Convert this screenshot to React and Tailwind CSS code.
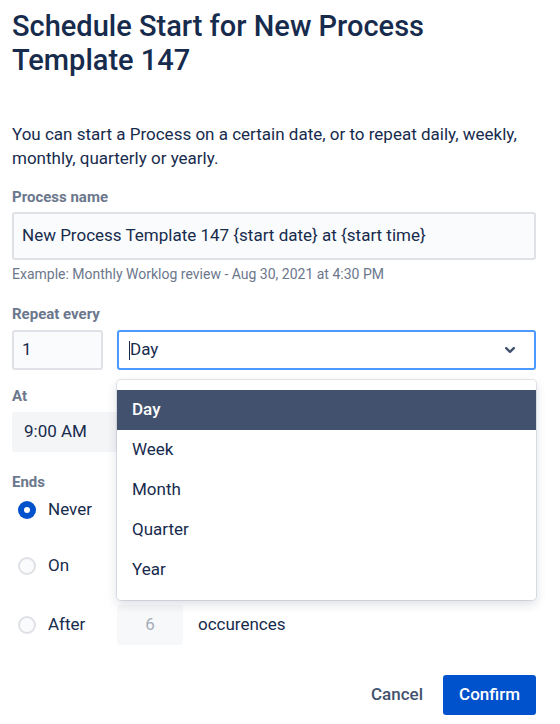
import React from "react";

function Radio({ checked }) {
  if (checked) {
    return (
      <span className="flex h-[18px] w-[18px] items-center justify-center rounded-full bg-[#0052cc]">
        <span className="h-[6px] w-[6px] rounded-full bg-white" />
      </span>
    );
  }
  return <span className="block h-[18px] w-[18px] rounded-full border-2 border-[#dfe1e6] bg-[#fafbfc]" />;
}

export default function App() {
  const options = ["Day", "Week", "Month", "Quarter", "Year"];
  return (
    <div className="min-h-[724px] w-[560px] bg-white pl-3 pr-6 pt-[9px] pb-[9px] font-['Roboto',sans-serif] text-[#172b4d]">
      <h1 className="text-[29px] font-medium leading-[34px] text-[#172b4d]">
        Schedule Start for New Process Template 147
      </h1>
      <p className="mt-[45px] text-[17px] leading-6">
        You can start a Process on a certain date, or to repeat daily, weekly, monthly, quarterly or yearly.
      </p>

      <div className="mt-[19px] text-[15px] font-bold leading-4 text-[#6b778c]">Process name</div>
      <div className="mt-[7px] flex h-12 items-center rounded-[3px] border-2 border-[#dfe1e6] bg-[#fafbfc] px-2 text-[17px]">
        New Process Template 147 {"{start date}"} at {"{start time}"}
      </div>
      <div className="mt-1 text-sm leading-5 text-[#6b778c]">
        Example: Monthly Worklog review - Aug 30, 2021 at 4:30 PM
      </div>

      <div className="mt-[22px] text-[15px] font-bold leading-4 text-[#6b778c]">Repeat every</div>
      <div className="mt-2 flex gap-[14px]">
        <div className="flex h-10 w-[91px] items-center rounded-[3px] border-2 border-[#dfe1e6] bg-[#fafbfc] px-2 text-[17px]">
          1
        </div>
        <div className="relative flex-1">
          <div className="flex h-10 items-center rounded-[3px] border-2 border-[#4c9aff] bg-white pl-[10px] pr-[14px] text-[17px]">
            <span className="h-[19px] w-px bg-[#172b4d]" />
            <span className="flex-1">Day</span>
            <svg width="20" height="20" viewBox="0 0 20 20" className="text-[#42526e]">
              <polyline points="6.2,8.2 10,11.8 13.8,8.2" fill="none" stroke="currentColor" strokeWidth="2.4" strokeLinecap="round" strokeLinejoin="round" />
            </svg>
          </div>
          <div className="absolute left-0 right-0 top-full z-10 mt-[10px] rounded-[4px] bg-white py-[10px] shadow-[0_0_0_1px_rgba(9,30,66,0.1),0_4px_11px_rgba(9,30,66,0.15)]">
            {options.map((o, i) => (
              <div
                key={o}
                className={
                  i === 0
                    ? "flex h-10 items-center bg-[#42526e] pl-[15px] text-[17px] font-medium text-white"
                    : "flex h-10 items-center pl-[15px] text-[17px] text-[#172b4d]"
                }
              >
                {o}
              </div>
            ))}
          </div>
        </div>
      </div>

      <div className="mt-[18px] text-[15px] font-bold leading-4 text-[#6b778c]">At</div>
      <div className="mt-2 flex h-10 w-[200px] items-center rounded-[3px] border-2 border-[#f4f5f7] bg-[#f4f5f7] px-[10px] text-[17px]">
        9:00 AM
      </div>

      <div className="mt-[22px] text-[15px] font-bold leading-4 text-[#6b778c]">Ends</div>
      <div className="flex h-10 items-center pl-[6px]">
        <Radio checked />
        <span className="ml-3 text-[17px]">Never</span>
      </div>
      <div className="mt-4 flex h-10 items-center pl-[6px]">
        <Radio />
        <span className="ml-3 text-[17px]">On</span>
      </div>
      <div className="mt-[19px] flex h-10 items-center">
        <div className="flex w-[105px] items-center pl-[6px]">
          <Radio />
          <span className="ml-3 text-[17px]">After</span>
        </div>
        <div className="flex h-10 w-[66px] items-center justify-center rounded-[3px] bg-[#f7f8f9] text-[17px] text-[#a5adba]">
          6
        </div>
        <span className="ml-[15px] text-[17px]">occurences</span>
      </div>

      <div className="mt-[30px] flex justify-end gap-1">
        <button className="h-10 rounded-[3px] px-4 text-[17px] font-medium text-[#42526e]">Cancel</button>
        <button className="h-10 rounded-[3px] bg-[#0052cc] px-4 text-[17px] font-medium text-white">Confirm</button>
      </div>
    </div>
  );
}
